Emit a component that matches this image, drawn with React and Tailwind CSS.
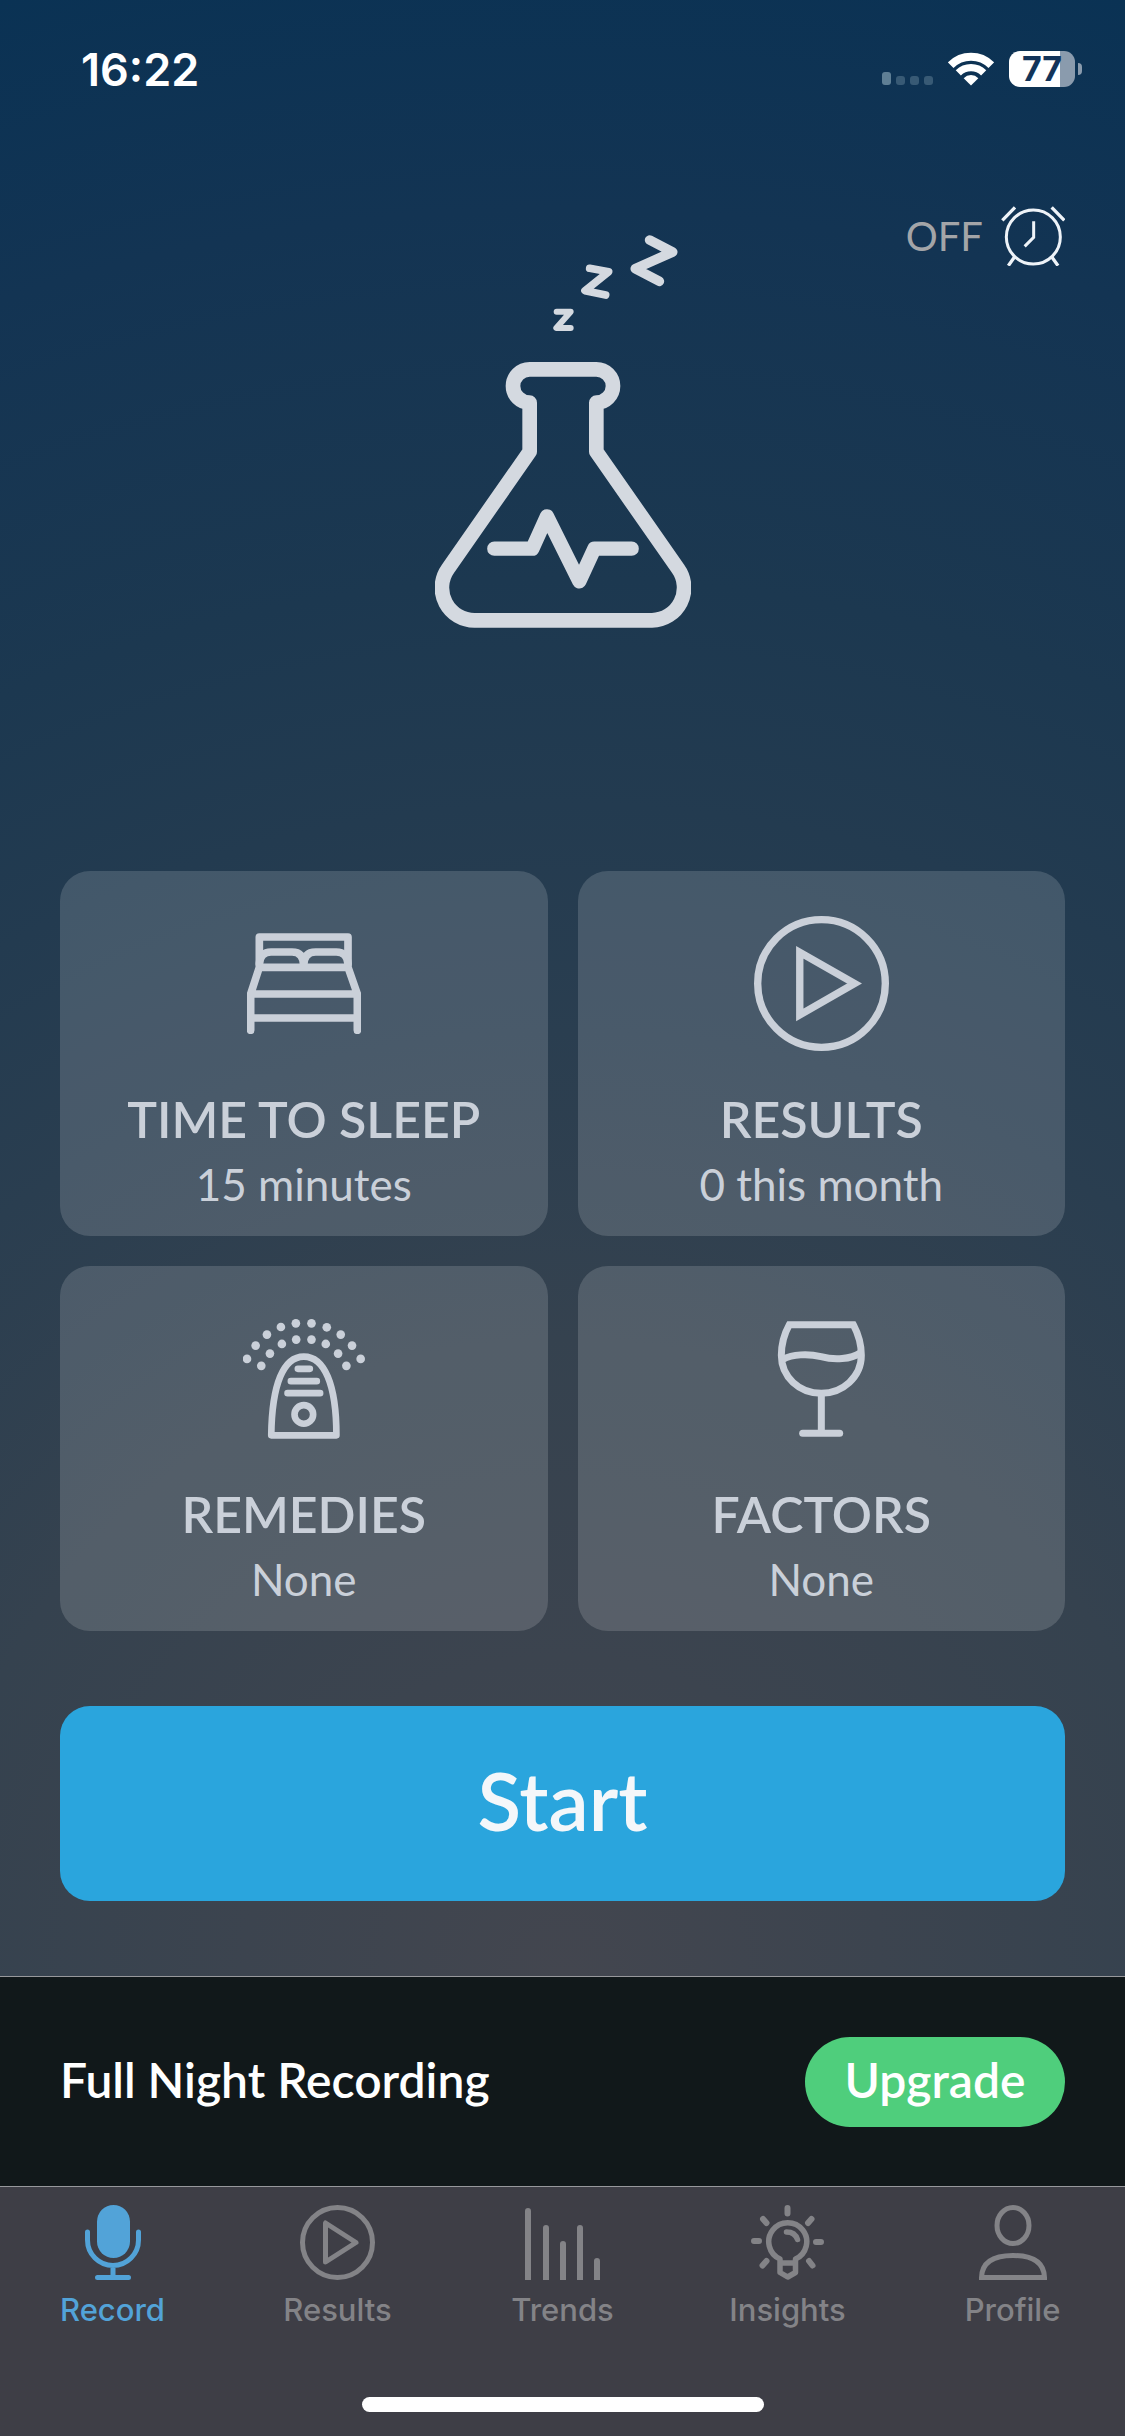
import { useState } from 'react'

function StatusBar() {
  return (
    <header className="flex h-[138px] items-center justify-between pl-[81px] pr-[43px] text-white font-['Inter',sans-serif]">
      <span className="text-[45px] leading-none font-semibold">16:22</span>
      <div className="flex items-center gap-[15px]">
        <div className="flex h-8 items-end gap-[5px]">
          <span className="h-[13px] w-[9px] rounded-[3px] bg-[#5f7f95]" />
          <span className="h-[9px] w-[9px] rounded-[3px] bg-[#385a75]" />
          <span className="h-[9px] w-[9px] rounded-[3px] bg-[#385a75]" />
          <span className="h-[9px] w-[9px] rounded-[3px] bg-[#385a75]" />
        </div>
        <svg className="h-[34px] w-[46px]" viewBox="264 65 138 101" fill="none" stroke="currentColor">
          <path d="M272 104A86 86 0 0 1 394 104" strokeWidth="24" />
          <path d="M295 127A54 54 0 0 1 371 127" strokeWidth="22" />
          <path d="M333 165L311 143A31 31 0 0 1 355 143Z" fill="currentColor" stroke="none" />
        </svg>
        <div className="flex items-center gap-[3px]">
          <div className="h-9 w-[66px] rounded-[11px] bg-[linear-gradient(to_right,#fff_77%,#8a9bad_77%)] text-center text-[34px] leading-9 font-bold text-[#12345a]">
            77
          </div>
          <span className="h-3 w-1 rounded-r-full bg-[#8a9bad]" />
        </div>
      </div>
    </header>
  )
}

function AlarmIcon() {
  return (
    <svg className="h-[60px] w-[64px]" viewBox="422 530 192 180" fill="none" stroke="#eef3f8" strokeWidth="9">
      <circle cx="519" cy="623" r="81" />
      <path d="M520 576V624L493 651" />
      <path d="M462 684L444 709M575 684L593 709M426 573L464 534M574 534L612 573" strokeWidth="10" />
    </svg>
  )
}

function FlaskLogo() {
  return (
    <svg
      className="h-[393px] w-[256px]"
      viewBox="0 0 768 1179"
      fill="none"
      stroke="#d4d9e0"
      strokeLinecap="round"
      strokeLinejoin="round"
    >
      <path d="M644 15L713 51L601 101L673 139" strokeWidth="29" />
      <path d="M464 100L521 110L450 167L512 180" strokeWidth="23" />
      <path d="M365 230H407L364 279H407" strokeWidth="18" />
      <path
        d="M284 503A50 50 0 0 1 284 403H484A50 50 0 0 1 484 503V650L729 1001A98 98 0 0 1 651 1156H121A98 98 0 0 1 39 1001L284 650Z"
        strokeWidth="44"
      />
      <path d="M178 941H292L336 844L433 1039L478 941H590" strokeWidth="43" />
    </svg>
  )
}

function BedIcon() {
  return (
    <svg
      className="h-[101px] w-[114px]"
      viewBox="0 0 342 303"
      fill="none"
      stroke="currentColor"
      strokeWidth="23"
      strokeLinecap="round"
      strokeLinejoin="round"
    >
      <path d="M37 103V12H303V103ZM37 103L11 183V292M303 103L331 183V292M11 183H331M11 255H331" />
      <path d="M37 92Q40 57 72 57H135Q170 57 170 98Q170 57 206 57H268Q300 57 303 92" />
    </svg>
  )
}

function PlayIcon() {
  return (
    <svg className="h-[135px] w-[135px]" viewBox="0 0 404 404" fill="none" stroke="currentColor" strokeWidth="22">
      <circle cx="202" cy="202" r="191" />
      <path d="M137 109V296L301 202Z" />
    </svg>
  )
}

const mist = [
  [563, 297], [589, 257], [623, 224], [665, 201], [710, 190],
  [757, 190], [803, 202], [845, 224], [879, 257], [905, 297],
  [606, 318], [632, 281], [668, 252], [711, 239],
  [757, 239], [800, 252], [837, 281], [862, 318],
]

function DiffuserIcon() {
  return (
    <svg
      className="h-[120px] w-[122px]"
      viewBox="551 177 367 361"
      fill="none"
      stroke="currentColor"
      strokeWidth="20"
      strokeLinecap="round"
      strokeLinejoin="round"
    >
      {mist.map(([x, y]) => (
        <circle key={`${x}-${y}`} cx={x} cy={y} r="13" fill="currentColor" stroke="none" />
      ))}
      <path d="M636 527C638 372 673 290 734 290C795 290 832 372 832 527Z" />
      <path d="M716 327H752M695 364H773M685 400H783" />
      <circle cx="734" cy="464" r="28" />
    </svg>
  )
}

function WineIcon() {
  return (
    <svg className="h-[116px] w-[88px]" viewBox="618 182 264 348" fill="none" stroke="currentColor" strokeWidth="21">
      <path d="M655 193H847C864 225 871 258 871 285C871 350 815 399 751 399C685 399 631 350 631 285C631 255 639 222 655 193Z" />
      <path d="M635 297C665 282 710 279 750 289C790 300 840 297 868 278M751 399V519" />
      <path d="M695 519H806" strokeLinecap="round" />
    </svg>
  )
}

const tiles = [
  { title: 'TIME TO SLEEP', value: '15 minutes', Icon: BedIcon },
  { title: 'RESULTS', value: '0 this month', Icon: PlayIcon },
  { title: 'REMEDIES', value: 'None', Icon: DiffuserIcon },
  { title: 'FACTORS', value: 'None', Icon: WineIcon },
]

function Tile({ title, value, Icon }) {
  return (
    <button type="button" className="flex flex-col items-center rounded-[30px] bg-white/15 pt-[45px] pb-[21px] text-[#cad0d9]">
      <span className="flex h-[135px] items-center justify-center">
        <Icon />
      </span>
      <span className="mt-[38px] text-[50px] leading-[60px] font-semibold">{title}</span>
      <span className="mt-1 text-[44px] leading-[62px]">{value}</span>
    </button>
  )
}

const tabs = [
  {
    name: 'Record',
    width: 56,
    art: (
      <>
        <rect x="12" y="0" width="33" height="53" rx="16.5" fill="currentColor" stroke="none" />
        <path d="M2.5 27V35A25.5 25.5 0 0 0 53.5 35V27M28 61V72M12.5 72.5H43.5" />
      </>
    ),
  },
  {
    name: 'Results',
    width: 75,
    art: (
      <>
        <circle cx="37.5" cy="37.5" r="35" />
        <path d="M25.5 18V57L56 37.5Z" />
      </>
    ),
  },
  {
    name: 'Trends',
    width: 75,
    art: <path d="M3 6V80M21 23V80M38 39V80M55 23V80M72 56V80" strokeWidth="6" />,
  },
  {
    name: 'Insights',
    width: 73,
    art: (
      <>
        <path d="M29 54A19 19 0 1 1 44.5 54V67.5L36.7 72L29 67.5ZM29 58H44.5" strokeWidth="5.5" />
        <path d="M35.5 27C41 27 45 30 46.5 34.5" strokeWidth="5.5" />
        <path
          d="M36.5 3V8.5M12 14L15.5 18M60.5 14L57 18M3 36H8M65 37H70M11.5 60.5L15.5 56M58 56L61.5 60.5"
          strokeWidth="6"
        />
      </>
    ),
  },
  {
    name: 'Profile',
    width: 68,
    art: (
      <>
        <ellipse cx="34" cy="20.5" rx="16" ry="18" />
        <path d="M2.5 72.5C3 57 15 50.5 34 50.5C53 50.5 65 57 65.5 72.5Z" strokeLinejoin="miter" />
      </>
    ),
  },
]

function TabBar() {
  const [active, setActive] = useState('Record')

  return (
    <nav className="flex flex-1 flex-col border-t border-[#97989c] bg-[#3e3e46] font-['Inter',sans-serif]">
      <div className="grid grid-cols-5">
        {tabs.map((tab) => (
          <button
            key={tab.name}
            type="button"
            onClick={() => setActive(tab.name)}
            className={
              'flex flex-col items-center pt-[18px] ' + (tab.name === active ? 'text-[#52a3d8]' : 'text-[#838387]')
            }
          >
            <svg
              width={tab.width}
              height="75"
              viewBox={`0 0 ${tab.width} 75`}
              fill="none"
              stroke="currentColor"
              strokeWidth="5"
              strokeLinecap="round"
              strokeLinejoin="round"
            >
              {tab.art}
            </svg>
            <span className="mt-2.5 text-[31px] leading-10 font-medium">{tab.name}</span>
          </button>
        ))}
      </div>
      {/* Home indicator */}
      <div className="mx-auto mt-auto mb-6 h-[15px] w-[402px] rounded-full bg-white" />
    </nav>
  )
}

export default function App() {
  return (
    <div className="flex min-h-screen flex-col font-['Lato',sans-serif]">
      <main className="flex flex-col bg-[radial-gradient(circle_at_50%_100%,#43464f_0%,#35424f_31%,#2a3e50_46%,#1c3850_68%,#133453_86%,#0a3254_100%)]">
        <StatusBar />

        <div className="flex justify-end px-[60px] pt-[67px]">
          <button type="button" className="flex items-center gap-[18px] text-[40px] leading-[62px] text-[#a3a5a8]">
            OFF
            <AlarmIcon />
          </button>
        </div>

        <div className="-mt-8 flex justify-center">
          <FlaskLogo />
        </div>

        <section className="mt-[243px] grid grid-cols-2 gap-[30px] px-[60px]">
          {tiles.map((tile) => (
            <Tile key={tile.title} {...tile} />
          ))}
        </section>

        <div className="px-[60px] py-[75px]">
          <button
            type="button"
            className="h-[195px] w-full rounded-[30px] bg-[#2aa5dd] pb-2 text-[80px] leading-none font-semibold text-[#f4f7fa]"
          >
            Start
          </button>
        </div>
      </main>

      <section className="flex h-[210px] items-center justify-between border-t border-[#97989c] bg-[#11181a] px-[60px] text-[48px] leading-none font-semibold text-white">
        <h2 className="pb-1">Full Night Recording</h2>
        <button type="button" className="h-[90px] w-[260px] rounded-full bg-[#4fce7c] pb-1">
          Upgrade
        </button>
      </section>

      <TabBar />
    </div>
  )
}
